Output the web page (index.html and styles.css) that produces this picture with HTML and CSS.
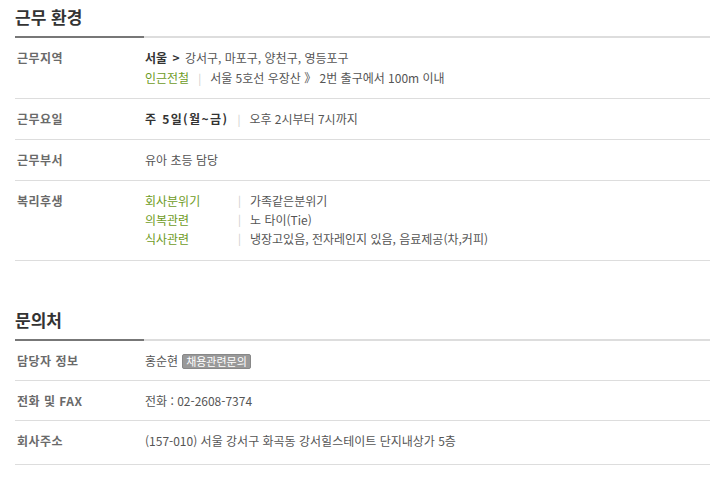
FILE: index.html
```html
<!DOCTYPE html>
<html lang="ko">
<head>
<meta charset="utf-8">
<link rel="stylesheet" href="styles.css">
</head>
<body>
<div class="wrap">
  <section class="sec">
    <h2 class="sec-title">근무 환경</h2>
    <dl class="rows">
      <div class="row">
        <dt>근무지역</dt>
        <dd>
          <div><b class="strong">서울</b> <b class="arrow">&gt;</b> 강서구, 마포구, 양천구, 영등포구</div>
          <div><span class="green">인근전철</span><span class="bar">|</span>서울 5호선 우장산 》 2번 출구에서 100m 이내</div>
        </dd>
      </div>
      <div class="row">
        <dt>근무요일</dt>
        <dd><b class="strong wide">주 5일(월~금)</b><span class="bar">|</span>오후 2시부터 7시까지</dd>
      </div>
      <div class="row">
        <dt>근무부서</dt>
        <dd>유아 초등 담당</dd>
      </div>
      <div class="row benefits">
        <dt>복리후생</dt>
        <dd>
          <div class="ben"><span class="green cat">회사분위기</span><span class="bar">|</span><span>가족같은분위기</span></div>
          <div class="ben"><span class="green cat">의복관련</span><span class="bar">|</span><span>노 타이(Tie)</span></div>
          <div class="ben"><span class="green cat">식사관련</span><span class="bar">|</span><span>냉장고있음, 전자레인지 있음, 음료제공(차,커피)</span></div>
        </dd>
      </div>
    </dl>
  </section>
  <section class="sec sec2">
    <h2 class="sec-title">문의처</h2>
    <dl class="rows">
      <div class="row tight">
        <dt>담당자 정보</dt>
        <dd class="contact">홍순현 <span class="badge">채용관련문의</span></dd>
      </div>
      <div class="row tight">
        <dt>전화 및 FAX</dt>
        <dd>전화 : 02-2608-7374</dd>
      </div>
      <div class="row last">
        <dt>회사주소</dt>
        <dd>(157-010) 서울 강서구 화곡동 강서힐스테이트 단지내상가 5층</dd>
      </div>
    </dl>
  </section>
</div>
</body>
</html>
```

FILE: styles.css
```css
html, body {
  margin: 0;
  padding: 0;
  background: #fff;
}
body {
  font-family: "Noto Sans CJK KR", "Noto Sans", sans-serif;
  font-size: 12px;
  color: #555;
}
.wrap {
  width: 695px;
  padding: 0 13px 0 15px;
}
.sec-title {
  margin: 0;
  height: 36px;
  line-height: 34px;
  font-size: 17px;
  font-weight: bold;
  color: #333;
  padding-bottom: 2px;
  background: linear-gradient(to right, #777 129px, #ddd 129px) left bottom / 100% 2px no-repeat;
}
.sec2 {
  margin-top: 42px;
}
.rows {
  margin: 0;
}
.row {
  display: flex;
  padding: 10px 0;
  line-height: 20px;
  border-bottom: 1px solid #ddd;
}
.row.tight {
  padding-bottom: 9px;
}
.row.benefits {
  padding-bottom: 12px;
}
.row.last {
  padding-bottom: 13px;
}
dt {
  width: 128px;
  height: 20px;
  padding-left: 2px;
  font-weight: bold;
  color: #6a6a6a;
  letter-spacing: 0.5px;
}
dd {
  margin: 0;
  flex: 1;
}
dd > div {
  height: 20px;
}
.strong {
  color: #333;
}
.wide {
  letter-spacing: 1.4px;
}
.arrow {
  color: #333;
  margin: 0 2px;
}
.green {
  color: #6e9b1e;
}
.bar {
  color: #ccc;
  margin: 0 9px;
  font-size: 11px;
}
dd > div.ben {
  display: flex;
  height: 19px;
  line-height: 19px;
}
.cat {
  width: 84px;
}
.contact {
  display: flex;
  align-items: center;
  gap: 4px;
  height: 20px;
}
.badge {
  display: block;
  background: #999;
  border: 1px solid #888;
  color: #fff;
  font-size: 11px;
  line-height: 13px;
  height: 13px;
  padding: 0 3px;
  border-radius: 2px;
}
```
